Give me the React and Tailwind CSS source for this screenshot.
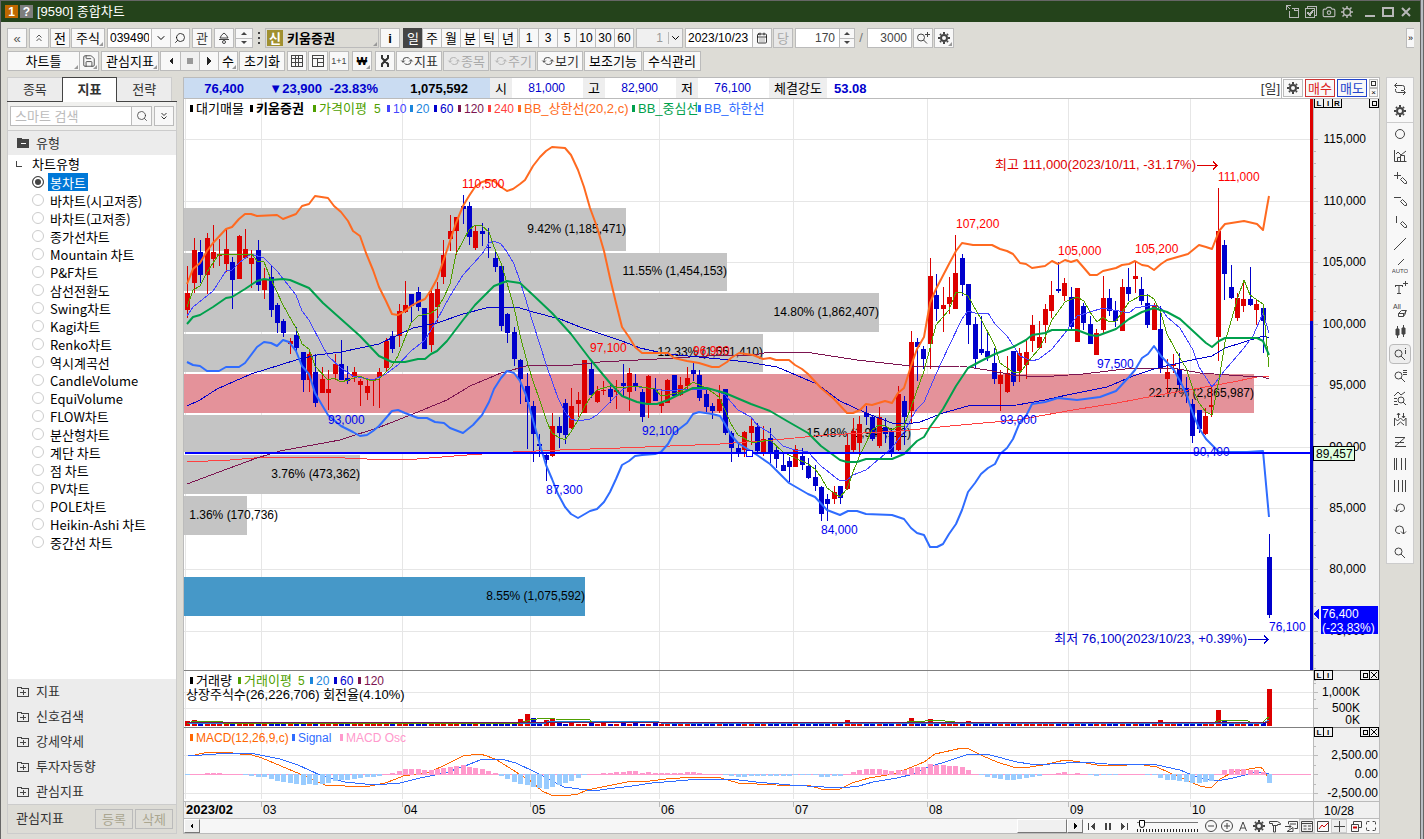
import React, { useState } from 'react';
import clsx from 'clsx';
import { Settings, Camera, Search, ChevronDown, Save, CalendarDays, Maximize } from 'lucide-react';

const RED = '#dd0000';
const BLUE = '#0000cc';

// high, body top, body bottom, low, direction (1 = up)
const CANDLES = [
  [266, 293, 310, 318, 1], [238, 250, 283, 293, 1], [240, 252, 275, 283, 0], [233, 238, 275, 294, 1], [225, 252, 259, 268, 1],
  [239, 254, 256, 266, 1], [229, 249, 264, 272, 1], [257, 262, 280, 309, 0], [235, 236, 279, 279, 1], [229, 249, 258, 258, 1],
  [250, 258, 264, 288, 1], [240, 250, 285, 291, 0], [268, 279, 290, 299, 1], [266, 277, 310, 317, 0], [303, 305, 323, 333, 0],
  [319, 321, 333, 337, 0], [338, 341, 344, 354, 1], [327, 335, 348, 352, 0], [352, 352, 380, 392, 0], [349, 354, 380, 392, 1],
  [354, 372, 403, 407, 0], [367, 379, 393, 393, 1], [370, 389, 393, 410, 1], [354, 364, 374, 380, 1], [340, 364, 380, 380, 0],
  [366, 378, 381, 384, 0], [367, 372, 377, 382, 1], [379, 381, 385, 406, 1], [380, 386, 393, 400, 1], [379, 379, 380, 406, 1],
  [368, 372, 377, 408, 1], [338, 341, 368, 372, 1], [331, 336, 349, 353, 0], [304, 311, 336, 347, 1], [281, 305, 312, 313, 1],
  [294, 294, 306, 322, 0], [287, 292, 307, 311, 0], [308, 308, 349, 349, 0], [290, 293, 345, 352, 1], [282, 289, 307, 322, 1],
  [240, 255, 277, 284, 1], [215, 231, 239, 251, 1], [217, 217, 231, 255, 1], [195, 206, 209, 224, 0], [202, 206, 237, 245, 0],
  [225, 231, 248, 250, 1], [223, 231, 234, 246, 0], [228, 247, 248, 258, 0], [252, 258, 267, 272, 0], [265, 266, 326, 331, 0],
  [313, 314, 333, 343, 0], [327, 332, 359, 366, 0], [359, 360, 379, 404, 0], [373, 386, 402, 449, 0], [401, 406, 434, 462, 0],
  [434, 444, 446, 457, 0], [453, 455, 460, 481, 0], [413, 426, 456, 457, 1], [417, 426, 433, 448, 0], [399, 403, 435, 444, 0],
  [388, 406, 428, 429, 1], [392, 400, 404, 417, 1], [360, 360, 413, 413, 1], [360, 369, 395, 398, 0], [386, 391, 402, 403, 1],
  [381, 390, 391, 395, 1], [385, 389, 397, 403, 0], [380, 390, 392, 409, 1], [364, 383, 386, 396, 0], [368, 373, 392, 411, 1],
  [374, 383, 386, 391, 0], [389, 392, 417, 422, 0], [375, 376, 404, 418, 1], [378, 389, 401, 401, 0], [389, 403, 406, 413, 1],
  [379, 380, 403, 403, 1], [375, 375, 396, 396, 0], [377, 385, 395, 396, 1], [367, 378, 386, 390, 1], [363, 370, 374, 381, 0],
  [370, 375, 398, 401, 0], [389, 394, 407, 412, 0], [403, 406, 411, 419, 0], [385, 399, 411, 413, 1], [389, 389, 433, 435, 0],
  [431, 433, 448, 462, 0], [442, 448, 452, 457, 0], [431, 432, 450, 457, 1], [418, 426, 433, 445, 1], [423, 427, 451, 453, 0],
  [426, 439, 453, 456, 1], [428, 438, 453, 463, 0], [447, 450, 459, 468, 0], [453, 465, 471, 471, 0], [457, 461, 467, 482, 0],
  [445, 449, 467, 467, 1], [448, 456, 465, 470, 0], [458, 466, 478, 479, 0], [465, 477, 486, 491, 0], [486, 487, 514, 521, 0],
  [494, 499, 504, 521, 0], [486, 492, 499, 504, 1], [486, 486, 498, 504, 0], [434, 445, 489, 490, 1], [418, 431, 450, 452, 1],
  [416, 424, 443, 456, 1], [406, 413, 417, 425, 0], [415, 417, 439, 441, 0], [407, 417, 446, 448, 1], [418, 427, 434, 443, 0],
  [430, 432, 452, 457, 0], [386, 394, 450, 451, 1], [396, 401, 417, 445, 0], [331, 342, 411, 424, 1], [338, 342, 347, 381, 0],
  [346, 349, 359, 369, 0], [258, 276, 344, 369, 1], [274, 295, 309, 321, 0], [287, 305, 309, 332, 1], [277, 297, 304, 314, 1],
  [235, 273, 309, 309, 1], [254, 258, 285, 296, 0], [284, 284, 325, 344, 0], [317, 324, 359, 368, 0], [316, 349, 353, 355, 0],
  [333, 351, 357, 361, 0], [348, 363, 379, 384, 0], [370, 375, 384, 411, 1], [356, 373, 392, 393, 1], [351, 351, 382, 386, 0],
  [348, 353, 371, 382, 1], [340, 352, 365, 379, 1], [315, 325, 341, 352, 1], [321, 337, 348, 349, 1], [304, 309, 325, 343, 1],
  [281, 295, 311, 318, 1], [262, 289, 291, 293, 0], [278, 283, 296, 301, 1], [287, 297, 327, 330, 0], [288, 288, 342, 342, 1],
  [303, 306, 323, 330, 0], [316, 324, 344, 344, 0], [329, 333, 355, 355, 1], [276, 298, 330, 333, 1], [289, 298, 311, 316, 0],
  [301, 310, 321, 327, 0], [279, 287, 331, 331, 1], [268, 287, 294, 301, 0], [262, 276, 279, 293, 1], [277, 289, 301, 305, 0],
  [294, 303, 325, 328, 0], [303, 305, 330, 330, 1], [306, 329, 368, 373, 0], [359, 372, 379, 393, 1], [354, 364, 366, 373, 1],
  [353, 369, 385, 389, 0], [377, 388, 392, 403, 0], [399, 404, 436, 443, 0], [410, 410, 429, 433, 0], [408, 416, 434, 435, 1],
  [386, 405, 407, 417, 1], [188, 231, 337, 361, 1], [240, 245, 274, 300, 0], [265, 287, 298, 299, 0], [293, 298, 318, 321, 1],
  [283, 299, 306, 312, 1], [267, 299, 305, 306, 0], [299, 304, 310, 325, 1], [308, 308, 321, 353, 0], [534, 557, 615, 618, 0],
];

const LINES = {
  ma240: '187,462 230,460 267,457 323,457 367,459 417,459 467,455 513,452 560,450 620,448 720,444 773,440 827,435 900,431 950,426 1017,420 1073,410 1117,403 1154,396 1200,388 1233,382 1257,377 1269,376',
  ma120: '187,484 219,472 257,458 280,451 340,440 380,427 413,414 447,400 470,386 501,373 530,365 573,365 600,362 657,359 707,356 753,355 770,352 805,352 857,360 920,367 960,366 987,370 1013,375 1040,377 1083,374 1133,368 1173,368 1200,373 1243,376 1263,377 1269,379',
  ma60: '187,406 200,400 217,389 251,374 296,360 317,355 341,352 379,344 398,335 413,328 437,323 463,314 490,307 517,307 533,312 560,319 580,327 622,341 640,348 667,354 720,359 747,362 777,367 817,384 840,401 866,413 892,423 907,424 920,422 943,413 968,406 1017,405 1045,400 1067,395 1107,387 1133,376 1154,369 1187,361 1212,356 1225,348 1244,342 1263,336 1269,338',
  ma10: '187,316 193,307 213,291 226,271 232,270 239,263 251,254 264,258 277,271 296,295 302,311 309,320 322,345 328,356 341,368 353,376 373,380 386,374 398,365 411,351 425,340 437,320 450,296 463,275 482,254 489,243 494,241 501,244 507,252 514,264 520,281 533,323 547,367 558,398 565,412 571,419 578,421 590,419 597,415 610,402 622,390 629,386 648,388 668,391 687,389 712,389 725,395 738,410 751,417 757,425 770,433 783,446 795,450 808,452 821,466 840,481 847,480 853,475 866,470 879,459 892,448 904,432 911,419 917,409 924,402 936,374 949,346 962,319 968,311 975,313 988,313 995,324 1007,336 1020,356 1032,361 1039,359 1052,349 1065,333 1077,316 1090,312 1103,308 1129,313 1135,308 1154,305 1161,308 1167,317 1180,328 1193,350 1199,367 1212,387 1225,370 1244,348 1253,336 1263,313 1269,333',
  ma5: '187,307 193,290 200,286 207,272 219,254 252,254 257,261 264,262 270,277 283,305 296,328 302,344 309,349 315,366 328,380 334,378 341,382 348,380 360,376 366,379 373,381 379,379 392,366 398,356 405,338 411,323 418,316 431,313 437,309 444,297 450,284 456,254 463,241 469,230 475,225 482,226 489,232 494,247 501,263 507,283 514,307 520,335 526,358 533,381 540,401 547,422 552,433 558,437 565,440 571,432 578,420 584,408 590,398 597,390 610,386 622,388 635,386 648,388 655,389 661,396 668,395 680,392 687,387 693,382 706,388 712,392 719,397 725,410 731,424 738,435 751,442 757,442 770,440 783,452 795,458 808,464 815,469 821,477 827,488 840,497 847,489 853,472 860,455 866,443 872,430 879,425 885,426 892,430 898,426 904,426 911,407 924,371 930,348 936,325 949,310 956,292 962,293 968,296 981,319 995,346 1000,363 1013,372 1020,373 1032,357 1039,349 1045,337 1052,320 1065,302 1077,297 1084,301 1090,312 1097,322 1103,317 1109,322 1116,321 1129,302 1142,295 1148,295 1154,299 1161,313 1167,334 1180,358 1186,368 1193,389 1199,403 1206,412 1212,415 1219,380 1225,342 1238,297 1244,280 1250,295 1263,304 1269,367',
  upper: '187,284 193,269 200,263 207,251 213,243 226,229 232,227 239,219 245,214 251,214 257,216 277,215 283,219 296,214 302,206 309,204 315,196 328,198 334,206 341,212 348,221 353,231 360,236 366,253 373,270 379,287 386,301 392,314 398,315 405,311 411,306 418,302 425,299 431,290 437,279 444,259 456,223 463,206 469,196 475,187 482,182 489,180 494,181 501,187 507,191 513,189 520,184 525,180 533,166 540,157 546,151 552,147 565,148 571,155 578,170 584,187 590,208 597,227 604,251 610,278 616,303 622,327 629,337 635,347 642,353 668,353 674,358 687,361 699,363 712,367 719,367 727,362 731,358 739,353 753,355 763,359 770,358 776,360 789,360 795,365 802,369 808,374 821,388 834,399 847,413 853,413 860,410 866,404 872,405 885,401 892,403 898,393 904,388 911,366 917,349 924,337 930,303 936,289 949,264 956,251 962,243 973,245 992,245 1000,249 1007,251 1013,254 1020,263 1026,264 1032,268 1045,266 1052,261 1058,264 1065,260 1071,262 1077,260 1084,268 1090,275 1097,275 1103,271 1116,268 1122,265 1129,264 1135,261 1142,265 1148,266 1154,270 1161,264 1167,260 1188,254 1199,245 1206,247 1212,249 1219,231 1225,224 1244,221 1257,224 1263,230 1267,207 1269,196',
  middle: '187,324 193,317 200,315 213,307 226,298 232,297 245,289 257,281 264,279 270,280 283,279 290,280 309,288 323,303 360,336 379,356 392,362 405,362 418,359 425,359 431,354 437,351 447,341 463,320 475,305 494,286 507,281 520,283 533,295 552,313 571,334 590,359 610,383 622,396 637,402 647,404 657,404 668,400 680,394 693,388 707,388 725,393 751,404 770,411 787,421 808,433 821,446 840,460 847,462 857,462 866,459 892,459 904,454 917,441 924,437 930,427 943,409 956,386 968,368 981,361 995,354 1013,347 1026,340 1032,335 1045,333 1052,330 1077,330 1090,335 1097,336 1116,329 1129,319 1142,312 1154,308 1167,312 1180,319 1193,331 1206,343 1212,347 1219,341 1225,338 1257,338 1263,341 1269,355',
  lower: '187,362 193,365 200,366 207,371 219,371 226,367 239,367 245,363 257,347 264,342 271,343 277,346 283,340 289,342 296,351 302,366 309,374 315,393 322,405 328,415 341,426 353,432 360,436 367,435 373,431 379,426 392,411 398,410 405,413 418,418 427,418 435,422 444,423 450,428 463,433 473,425 482,415 489,402 494,389 501,378 507,371 514,373 520,381 526,395 533,420 540,445 546,465 552,479 558,494 565,507 571,514 578,518 590,511 597,509 604,502 610,492 616,479 622,465 629,461 635,456 642,455 655,454 661,452 668,444 674,433 687,423 693,414 699,412 712,414 720,416 725,424 731,435 738,443 757,455 770,464 789,483 808,494 815,497 827,510 840,515 848,511 857,511 866,514 892,515 904,519 911,528 917,533 924,535 930,547 937,547 943,544 949,534 956,524 962,510 968,492 975,483 981,474 988,468 995,464 1000,454 1007,448 1013,439 1020,422 1026,416 1032,404 1045,402 1058,398 1077,400 1100,397 1116,391 1129,377 1135,370 1142,358 1148,354 1154,346 1161,356 1174,370 1180,381 1186,393 1193,414 1199,428 1206,439 1212,445 1219,452 1247,452 1263,451 1269,517',
  macd: '188,756 195,755 208,752 225,752 240,754 252,755 262,758 300,774 325,785 345,786 370,786 385,783 396,779 403,776 430,772 447,764 463,756 480,754 487,756 497,760 516,772 532,782 542,791 551,795 565,796 578,794 587,790 607,786 632,781 642,782 666,779 694,777 721,778 738,783 776,785 811,786 821,789 840,789 852,783 869,778 893,774 907,769 924,762 935,754 962,748 969,749 983,756 997,762 1013,767 1030,767 1043,765 1065,760 1080,762 1097,765 1127,765 1137,764 1157,767 1170,773 1200,786 1205,787 1212,787 1220,779 1233,772 1260,767 1263,769 1269,780',
  signal: '188,756 230,753 255,754 280,759 298,765 320,775 345,782 375,785 400,783 420,778 445,773 465,766 480,760 501,759 516,763 537,773 564,787 594,791 607,789 632,786 652,783 700,779 731,779 756,782 790,785 824,787 842,788 859,786 873,782 897,778 914,774 928,767 945,762 969,754 990,755 1017,762 1030,764 1050,764 1083,762 1107,764 1157,765 1180,770 1197,777 1217,781 1233,778 1253,773 1263,772 1269,774',
  vol5: '187,724 193,721 222,721 223,723 520,723 530,720 545,718 555,719 590,720 592,723 907,722 925,721 935,720 955,722 960,723 1215,722 1222,720 1246,720 1250,722 1262,723 1266,719 1269,717',
};

const OSC = [
  -1, 1, 1, 2, 2, 2, 1, 0, 0, -1, -2, -3, -3, -5, -7, -8, -9, -10, -11, -10, -11, -10, -9, -7, -6, -6, -5, -4, -3, -3,
  -2, 1, 2, 4, 6, 6, 6, 5, 5, 6, 7, 8, 9, 10, 8, 7, 6, 4, 2, -2, -5, -8, -10, -11, -13, -14, -15, -13, -11, -9,
  -7, -4, -1, 0, 1, 2, 2, 3, 3, 4, 4, 2, 3, 2, 2, 2, 2, 2, 3, 3, 2, 1, 0, 0, -1, -2, -3, -3, -2, -2,
  -2, -2, -2, -2, -2, -1, -1, -1, -1, -3, -3, -2, -2, 1, 3, 5, 6, 6, 6, 5, 4, 5, 5, 7, 8, 8, 11, 10, 10, 9,
  9, 8, 5, 1, -1, -3, -4, -5, -6, -6, -5, -4, -3, -2, 0, 1, 2, 3, 1, 2, 0, -1, -2, -1, -1, -1, 0, 0, 1, 0,
  -1, -1, -4, -6, -6, -7, -8, -9, -9, -8, -7, 1, 5, 6, 6, 6, 5, 5, 3, -9,
];

// sessions whose volume stands out from the 2-3px floor: index -> [height, up]
const VOLUME_PEAKS = {
  0: [5, 1], 1: [6, 1], 6: [3, 1], 52: [7, 1], 53: [12, 1], 54: [8, 0], 55: [4, 0], 56: [6, 1], 57: [7, 1],
  103: [6, 1], 113: [8, 1], 116: [7, 1], 122: [5, 1], 152: [6, 1], 161: [16, 1], 162: [5, 0], 169: [37, 1],
};

const PROFILE = [
  { y: 208, h: 43, end: 626, label: '9.42% (1,185,471)' },
  { y: 253, h: 38, end: 727, label: '11.55% (1,454,153)' },
  { y: 293, h: 39, end: 879, label: '14.80% (1,862,407)' },
  { y: 334, h: 38, end: 763, label: '12.33% (1,551,410)' },
  { y: 374, h: 39, end: 1254, label: '22.77% (2,865,987)', fill: '#e4929a' },
  { y: 415, h: 37, end: 911, label: '15.48% (1,947,112)' },
  { y: 455, h: 39, end: 360, label: '3.76% (473,362)' },
  { y: 496, h: 39, end: 247, label: '1.36% (170,736)', labelEnd: 278 },
  { y: 577, h: 39, end: 585, label: '8.55% (1,075,592)', fill: '#4698c8' },
];

const PRICES = [
  [139, '115,000'], [201, '110,000'], [262, '105,000'], [324, '100,000'], [385, '95,000'],
  [447, '90,000'], [508, '85,000'], [569, '80,000'], [631, '75,000'],
];

const MONTHS = [[261, '03'], [402, '04'], [530, '05'], [659, '06'], [793, '07'], [927, '08'], [1068, '09'], [1190, '10']];

const MARKS = [
  [462, 188, '110,500', 1], [590, 352, '97,100', 1], [693, 355, '96,900', 1], [956, 228, '107,200', 1], [1058, 255, '105,000', 1],
  [1135, 253, '105,200', 1], [1218, 181, '111,000', 1], [328, 424, '93,000', 0], [546, 494, '87,300', 0], [642, 435, '92,100', 0],
  [821, 534, '84,000', 0], [1000, 424, '93,000', 0], [1097, 368, '97,500', 0], [1193, 456, '90,400', 0], [1269, 631, '76,100', 0],
];

const PRICE_LEGEND = [
  [190, '대기매물', '#000'], [250, '키움증권', '#000', 'bold'], [313, '가격이평', '#4f9f00'], [0, '5', '#4f9f00', '', 374],
  [387, '10', '#4444ff'], [410, '20', '#1c86dc'], [434, '60', BLUE], [458, '120', '#7c1450'], [488, '240', '#ff4040'],
  [518, 'BB_상한선(20,2,c)', '#ff6a20'], [632, 'BB_중심선', '#00a04c'], [698, 'BB_하한선', '#2f6cff'],
];
const VOLUME_LEGEND = [
  [190, '거래량', '#000'], [238, '거래이평', '#4f9f00'], [0, '5', '#4f9f00', '', 298], [310, '20', '#1c86dc'],
  [334, '60', BLUE], [358, '120', '#7c1450'],
];
const MACD_LEGEND = [[190, 'MACD(12,26,9,c)', '#ff6600'], [292, 'Signal', '#2f6cff'], [340, 'MACD Osc', '#ff99cc']];

const candleX = (i) => Math.round(187.4 + i * 6.4);

const Legend = ({ items, y }) => items.map(([x, label, color, weight, textX]) => (
  <g key={label + x} fill={color}>
    {x > 0 && <rect x={x} y={y - 8} width="3" height="7" />}
    <text x={textX || x + 6} y={y} fontSize={/[가-힣]/.test(label) ? 13 : 12} fontWeight={weight || 'normal'}>{label}</text>
  </g>
));

const CornerBox = ({ x, y, glyph }) => (
  <g stroke="#000" fill="#f0f0f0">
    <rect x={x + 0.5} y={y + 0.5} width="9" height="9" />
    {glyph === 'box' && <rect x={x + 3.5} y={y + 3.5} width="4" height="4" />}
    {glyph === 'x' && <path d={`M${x + 2} ${y + 2}l6 6m0 -6l-6 6`} shapeRendering="auto" />}
    {glyph.length === 1 && glyph !== 'x' && <text x={x + 5} y={y + 8} stroke="none" fill="#000" fontSize="8" fontWeight="bold" textAnchor="middle">{glyph}</text>}
  </g>
);

const Chart = () => (
  <svg viewBox="184 99 1195 719" className="block w-full h-auto font-['Liberation_Sans','Noto_Sans_CJK_KR',sans-serif] text-xs" shapeRendering="crispEdges" role="img" aria-label="키움증권 일봉 차트">
    <rect x="184" y="99" width="1195" height="719" fill="#fff" />
    <g stroke="#e6e6e6">
      {PRICES.map(([y]) => <path key={y} d={`M184 ${y + 0.5}H1310`} />)}
      {[692, 708, 755, 793].map((y) => <path key={y} d={`M184 ${y + 0.5}H1313`} />)}
      {[185, ...MONTHS.map(([x]) => x)].map((x) => <path key={x} d={`M${x + 0.5} 99V799`} />)}
    </g>

    {PROFILE.map(({ y, h, end, label, fill, labelEnd }) => (
      <g key={label}>
        <rect x="184" y={y} width={end - 184} height={h} fill={fill || '#c4c4c4'} />
        <text x={labelEnd || end} y={y + Math.round(h / 2) + 3} textAnchor="end">{label}</text>
      </g>
    ))}

    {CANDLES.map(([high, top, bottom, low, up], i) => (
      <g key={i} fill={up ? RED : BLUE}>
        <rect x={candleX(i)} y={high} width="1" height={low - high} />
        <rect x={candleX(i) - 2} y={top} width="5" height={Math.max(bottom - top, 1)} />
      </g>
    ))}

    <g fill="none" strokeLinejoin="round">
      <polyline points={LINES.ma240} stroke="#ff4040" />
      <polyline points={LINES.ma120} stroke="#7c1450" />
      <polyline points={LINES.ma60} stroke={BLUE} />
      <polyline points={LINES.ma10} stroke="#4444ff" />
      <polyline points={LINES.ma5} stroke="#4f9f00" />
      <g strokeWidth="2" shapeRendering="auto">
        <polyline points={LINES.upper} stroke="#ff6a20" />
        <polyline points={LINES.lower} stroke="#2f6cff" />
        <polyline points={LINES.middle} stroke="#00a04c" />
      </g>
    </g>

    <rect x="185" y="452" width="1126" height="2" fill="#0000ff" />
    <rect x="746.5" y="450.5" width="6" height="6" fill="#fff" stroke="#0000ff" />

    {MARKS.map(([x, y, label, high]) => (
      <text key={x} x={x} y={y} fill={high ? '#ff0000' : '#0000ee'}>{label}</text>
    ))}
    <text x="1196" y="169" fontSize="13" textAnchor="end" fill={RED}>최고 111,000(2023/10/11, -31.17%)</text>
    <path d="M1197 165.5h20m-4 -4l4 4l-4 4" fill="none" stroke={RED} />
    <text x="1247" y="643" fontSize="13" textAnchor="end" fill={BLUE}>최저 76,100(2023/10/23, +0.39%)</text>
    <path d="M1248 639.5h20m-4 -4l4 4l-4 4" fill="none" stroke={BLUE} />

    <Legend items={PRICE_LEGEND} y={113} />

    {/* volume */}
    {CANDLES.map(([, , , , up], i) => {
      const [h, rising] = VOLUME_PEAKS[i] || [2 + ((i * 7) % 5 < 2 ? 1 : 0), up];
      return <rect key={i} x={candleX(i) - 2} y={726 - h} width="5" height={h} fill={rising ? RED : BLUE} />;
    })}
    <path d="M187 723.5H545L548 721.5H658L662 723.5H1262L1269 720" fill="none" stroke="#1c86dc" />
    <polyline points={LINES.vol5} fill="none" stroke="#4f9f00" />
    <path d="M187 722.5H1269" stroke="#7c1450" />
    <path d="M184 670.5H1379M184 727.5H1379" stroke="#808080" />
    <Legend items={VOLUME_LEGEND} y={685} />
    <text x="186" y="699" fontSize="13">상장주식수(26,226,706) 회전율(4.10%)</text>

    {/* MACD */}
    <path d="M187 774.5H1311" stroke="#ff99cc" />
    <g fill="none">
      <polyline points={LINES.macd} stroke="#ff6600" />
      <polyline points={LINES.signal} stroke="#2f6cff" />
    </g>
    {OSC.map((v, i) => (
      <rect key={i} x={candleX(i) - 2} y={v > 0 ? 775 - v : 774} width="5" height={Math.abs(v)} fill={v > 0 ? '#ff99cc' : '#99ccff'} />
    ))}
    <Legend items={MACD_LEGEND} y={742} />

    {/* value axis */}
    <rect x="1313" y="99" width="66" height="719" fill="#f0f0f0" />
    <path d="M1313.5 99V818" stroke="#bbb" />
    <path d="M1313 670.5H1379M1313 727.5H1379" stroke="#808080" />
    <rect x="1310" y="99" width="3" height="222" fill={RED} />
    <rect x="1310" y="321" width="3" height="349" fill={BLUE} />
    <g stroke="#bbb">
      {PRICES.map(([y]) => <path key={y} d={`M1314 ${y + 0.5}h4m-4 12h2m-2 12h2m-2 13h2m-2 12h2`} />)}
      {[692, 708, 755, 774, 793].map((y) => <path key={y} d={`M1314 ${y + 0.5}h4m-4 -9h2`} />)}
    </g>
    <g textAnchor="end">
      {PRICES.map(([y, label]) => <text key={y} x="1366" y={y + 4}>{label}</text>)}
      <text x="1360" y="696">1,000K</text>
      <text x="1360" y="712">500K</text>
      <text x="1360" y="724">0K</text>
      <text x="1378" y="759">2,500.00</text>
      <text x="1378" y="778">0.00</text>
      <text x="1378" y="797">-2,500.00</text>
    </g>
    <rect x="1313.5" y="446.5" width="41" height="14" fill="#e0ffe0" stroke="#000" />
    <text x="1316" y="458">89,457</text>
    <path d="M1319 608v12l-6 -6z" fill="#0000ff" />
    <rect x="1321" y="606" width="57" height="28" fill="#0000ff" />
    <text x="1322" y="618" fill="#fff">76,400</text>
    <text x="1322" y="632" fill="#fff">(-23.83%)</text>
    <CornerBox x={1314} y={98} glyph="L" /><CornerBox x={1323} y={98} glyph="I" /><CornerBox x={1332} y={98} glyph="R" />
    <CornerBox x={1369} y={98} glyph="box" />
    {[670, 727].map((y) => (
      <g key={y}>
        <CornerBox x={1314} y={y} glyph="L" /><CornerBox x={1323} y={y} glyph="I" />
        <CornerBox x={1360} y={y} glyph="box" /><CornerBox x={1369} y={y} glyph="x" />
      </g>
    ))}

    {/* time axis */}
    <rect x="184" y="801" width="1129" height="17" fill="#f0f0f0" />
    <path d="M184 801.5H1379M1313.5 801V818M185.5 802v5" stroke="#bbb" />
    <text x="186" y="814" fontSize="13" fontWeight="bold">2023/02</text>
    {MONTHS.map(([x, label]) => (
      <g key={x}>
        <path d={`M${x + 0.5} 802v5`} stroke="#bbb" />
        <text x={x + 2} y="814">{label}</text>
      </g>
    ))}
    <text x="1324" y="815">10/28</text>
  </svg>
);

const Glyph = ({ children, size = 'w-4 h-4', className, crisp = true }) => (
  <svg viewBox="0 0 16 16" className={clsx('shrink-0', size, className)} fill="none" stroke="currentColor" shapeRendering={crisp ? 'crispEdges' : 'auto'} aria-hidden="true">{children}</svg>
);

const Cog = ({ className }) => (
  <Glyph className={className} crisp={false}>
    <circle cx="8" cy="8" r="3" strokeWidth="2" />
    <path d="M8 2v2M8 12v2M2 8h2M12 8h2M4 4l1 1M11 11l1 1M12 4l-1 1M5 11l-1 1" strokeWidth="2" />
  </Glyph>
);

const Cycle = () => (
  <Glyph size="w-3.5 h-3.5" crisp={false}>
    <path d="M3.500 9.500V7Q3.500 4 7.500 4Q10 4 11 5.500M12.500 6.500V9Q12.500 12 8.500 12Q6 12 5 10.500M1.500 7.500l2 2l2 -2M10.500 8.500l2 -2l2 2" />
  </Glyph>
);

const Btn = ({ className, menu, label, children, ...rest }) => (
  <button
    type="button"
    aria-label={label}
    className={clsx(
      'relative h-5 shrink-0 flex items-center justify-center border border-[#bbb] bg-[#f8f8f8] whitespace-nowrap leading-none cursor-pointer disabled:bg-[#e8e8e8] disabled:text-[#aaa]',
      menu && 'after:absolute after:right-px after:bottom-px after:border-2 after:border-transparent after:border-r-[#999] after:border-b-[#999]',
      className,
    )}
    {...rest}
  >
    {children}
  </button>
);

const Spinner = ({ className, label }) => (
  <div className={clsx('h-5 shrink-0 flex flex-col border border-[#bbb] bg-[#f8f8f8]', className)}>
    <button type="button" aria-label={`${label} 증가`} className="flex-1 flex items-center justify-center border-b border-[#bbb]">
      <svg viewBox="0 0 6 3" className="w-1.5 h-[3px]"><path d="M0 3h6l-3 -3z" fill="#444" /></svg>
    </button>
    <button type="button" aria-label={`${label} 감소`} className="flex-1 flex items-center justify-center">
      <svg viewBox="0 0 6 3" className="w-1.5 h-[3px]"><path d="M0 0h6l-3 3z" fill="#444" /></svg>
    </button>
  </div>
);

const Field = ({ label, className, ...rest }) => (
  <input type="text" aria-label={label} className={clsx('h-5 shrink-0 border border-[#bbb] bg-white px-1 text-xs outline-none', className)} {...rest} />
);

const TitleBar = () => (
  <header className="h-[21px] flex items-center bg-[#24431b] text-white pl-1 pr-[5px] text-[13px]">
    <span className="w-[13px] h-[13px] flex items-center justify-center bg-[#c06800] text-xs font-bold leading-none">1</span>
    <button type="button" aria-label="도움말" className="w-[13px] h-[13px] ml-0.5 flex items-center justify-center bg-[#7d7d7d] text-xs font-bold leading-none">?</button>
    <h1 className="ml-1 leading-none">[9590] 종합차트</h1>
    <div className="ml-auto flex items-center text-[#b8b8b8]">
      <button type="button" aria-label="도킹" className="w-[18px] flex justify-center"><Glyph><path d="M1.500 1.500h4m-4 0v4m0 -4l4 4M4.500 7v6.500h9V4.500H7M9.500 4v2.500h4" /></Glyph></button>
      <button type="button" aria-label="선택" className="w-[18px] flex justify-center"><Glyph><path d="M4.500 4V2.500h9v9H12M2.500 4.500h9v9h-9z" /><path d="M4.500 8l2.500 3l3 -5" strokeWidth="2" /></Glyph></button>
      <button type="button" aria-label="화면 캡처" className="w-[18px] flex justify-center"><Camera size={14} strokeWidth={2} /></button>
      <button type="button" aria-label="설정" className="w-[18px] flex justify-center">
        <Glyph crisp={false}><circle cx="8" cy="8" r="3.500" strokeWidth="1.500" /><path d="M8 2v2M8 12v2M2 8h2M12 8h2M3.500 3.500l2 2M10.500 10.500l2 2M12.500 3.500l-2 2M5.500 10.500l-2 2" strokeWidth="1.500" /></Glyph>
      </button>
      <button type="button" aria-label="최소화" className="w-[18px] ml-[5px] flex justify-center"><Glyph><path d="M3 12h10" strokeWidth="2" /></Glyph></button>
      <button type="button" aria-label="최대화" className="w-[18px] flex justify-center"><Glyph><path d="M3 4h10v8H3z" strokeWidth="2" /></Glyph></button>
      <button type="button" aria-label="닫기" className="w-[18px] flex justify-center"><Glyph crisp={false}><path d="M4 4l8 8m0 -8l-8 8" strokeWidth="2" /></Glyph></button>
    </div>
  </header>
);

const PERIODS = ['일', '주', '월', '분', '틱', '년'];
const MINUTES = ['1', '3', '5', '10', '30', '60'];

const Toolbar = () => {
  const [period, setPeriod] = useState('일');

  return (
    <div className="px-1.5 py-1.5 flex flex-col gap-[3px] text-[13px]">
      <div className="flex">
        <Btn className="w-5 text-[#555]" label="이전">«</Btn>
        <Btn className="w-5 ml-0.5" label="접기"><Glyph crisp={false} className="text-[#555]"><path d="M5.500 7.500L8 5l2.500 2.500M5.500 11L8 8.500l2.500 2.500" /></Glyph></Btn>
        <Btn className="w-5 ml-px">전</Btn>
        <Btn className="w-[34px] ml-px" menu>주식</Btn>
        <Field label="종목코드" defaultValue="039490" className="w-[45px] ml-0.5 !px-0.5" />
        <Btn className="w-5 -ml-px" label="종목 목록"><ChevronDown size={12} /></Btn>
        <Btn className="w-5 -ml-px" label="종목 찾기"><Search size={12} strokeWidth={1.5} className="-scale-x-100" /></Btn>
        <Btn className="w-5 ml-0.5 text-[#444]">관</Btn>
        <Btn className="w-5 ml-0.5" label="종목 알림"><Glyph className="text-[#444]" crisp={false}><path d="M8 3Q5 5 4 8h8Q11 5 8 3M3 9.500h10" /><circle cx="8" cy="12" r="1.500" /></Glyph></Btn>
        <Spinner className="w-[18px] ml-px" label="종목" />
        <span className="w-3 h-5 flex flex-col items-center justify-center gap-[3px]">
          <i className="w-0.5 h-0.5 bg-[#444]" /><i className="w-0.5 h-0.5 bg-[#444]" /><i className="w-0.5 h-0.5 bg-[#444]" />
        </span>
        <Btn className="w-[114px] !justify-start !bg-[#dddcd6] font-bold" menu>
          <span className="w-4 h-4 mx-px flex items-center justify-center bg-[#a09030] text-white">신</span>
          <span className="ml-[3px]">키움증권</span>
        </Btn>
        <Btn className="w-5 ml-px font-bold">i</Btn>
        <div className="flex ml-[3px]">
          {PERIODS.map((name) => (
            <Btn key={name} onClick={() => setPeriod(name)} aria-pressed={period === name} className={clsx('w-5 -mr-px', period === name && '!bg-[#444] !border-[#444] text-white')}>{name}</Btn>
          ))}
        </div>
        <div className="flex ml-0.5 text-xs">
          {MINUTES.map((name) => <Btn key={name} className="w-5 -mr-px">{name}</Btn>)}
        </div>
        <div className="relative ml-[3px] w-[47px]">
          <select aria-label="주기" disabled className="w-full h-5 appearance-none border border-[#bbb] bg-[#f0f0f0] pr-[19px] text-right text-xs text-[#999] opacity-100 [text-align-last:right]">
            <option>1</option>
          </select>
          <ChevronDown size={12} className="absolute right-px top-1 w-[14px] border-l border-[#bbb]" />
        </div>
        <Field label="조회일자" defaultValue="2023/10/23" className="w-[68px] ml-0.5 !px-0.5" />
        <Btn className="w-5 -ml-px" label="달력"><CalendarDays size={12} strokeWidth={1.5} /></Btn>
        <Btn className="w-5 ml-px" disabled>당</Btn>
        <Field label="조회 봉수" defaultValue="170" className="w-[45px] ml-0.5 text-right text-[#444]" />
        <Spinner className="w-4 -ml-px" label="봉수" />
        <span className="w-3 leading-5 text-center text-[#777]">/</span>
        <Field label="최대 봉수" defaultValue="3000" className="w-[45px] text-right text-[#444]" />
        <Btn className="w-5 ml-px text-[#444]" label="확대"><Glyph crisp={false}><circle cx="6" cy="7.500" r="3.500" /><path d="M8.500 10l3.500 3.500M12.500 2v5M10 4.500h5" /></Glyph></Btn>
        <Btn className="w-5 ml-px" label="차트 설정" menu><Cog className="text-[#444]" /></Btn>
        <Btn className="w-2 ml-auto text-[9px] border-r-0" label="도구 더보기">»</Btn>
      </div>

      <div className="flex">
        <Btn className="w-[73px]" menu>차트틀</Btn>
        <Btn className="w-5 -ml-px text-[#444]" label="저장" menu><Save size={14} strokeWidth={1.5} /></Btn>
        <Btn className="w-[58px] ml-0.5" menu>관심지표</Btn>
        <Btn className="w-[21px] ml-px" label="뒤로"><Glyph><path d="M10 4v8l-4 -4z" fill="#222" stroke="none" /></Glyph></Btn>
        <Btn className="w-5 -ml-px !bg-[#f0f0f0]" label="정지"><span className="w-1.5 h-1.5 bg-[#999]" /></Btn>
        <Btn className="w-5 -ml-px" label="앞으로"><Glyph><path d="M6 4v8l4 -4z" fill="#222" stroke="none" /></Glyph></Btn>
        <Btn className="w-5 -ml-px" menu>수</Btn>
        <Btn className="w-[46px] ml-px">초기화</Btn>
        <Btn className="w-5 ml-0.5 text-[#444]" label="표"><Glyph size="w-[18px] h-4"><path d="M2.500 2.500h11v11h-11zM2.500 5.500h11M2.500 9.500h11M6.500 2.500v11M9.500 2.500v11" /></Glyph></Btn>
        <Btn className="w-5 ml-px text-[#444]" label="분할"><Glyph size="w-[18px] h-4"><path d="M2.500 2.500h11v11h-11zM2.500 5.500h11M7.500 5.500v8M7.500 9.500h6" /></Glyph></Btn>
        <Btn className="w-5 ml-px text-[9px] text-[#444]" label="한 칸 추가">1+1</Btn>
        <Btn className="w-5 ml-[3px] text-[11px] font-bold" menu>₩</Btn>
        <Btn className="w-5 ml-[3px] text-[#333]" label="도구"><Glyph crisp={false}><path d="M5 2v3l6 6v3M11 2v3l-6 6v3" strokeWidth="2" /></Glyph></Btn>
        <Btn className="w-[46px] ml-px text-[#333]"><Cycle />지표</Btn>
        <Btn className="w-[46px] ml-px" disabled><Cycle />종목</Btn>
        <Btn className="w-[46px] ml-px" disabled><Cycle />주기</Btn>
        <Btn className="w-[46px] ml-px text-[#333]"><Cycle />보기</Btn>
        <Btn className="w-[58px] ml-px">보조기능</Btn>
        <Btn className="w-[58px] ml-px">수식관리</Btn>
      </div>
    </div>
  );
};

const CHART_TYPES = [
  '봉차트', '바차트(시고저종)', '바차트(고저종)', '종가선차트', 'Mountain 차트', 'P&F차트', '삼선전환도', 'Swing차트', 'Kagi차트',
  'Renko차트', '역시계곡선', 'CandleVolume', 'EquiVolume', 'FLOW차트', '분산형차트', '계단 차트', '점 차트', 'PV차트', 'POLE차트',
  'Heikin-Ashi 차트', '중간선 차트',
];
const GROUPS = ['지표', '신호검색', '강세약세', '투자자동향', '관심지표'];

const Folder = ({ open }) => (
  <svg viewBox="0 0 12 12" className="w-3 h-3 mr-[7px] shrink-0" fill="none" stroke="#444" shapeRendering="crispEdges" aria-hidden="true">
    <path d="M0.500 10.500V1.500h4v1h7v8z" fill={open ? '#444' : 'none'} />
    {open ? <path d="M4 6.500h5" stroke="#fff" /> : <path d="M3 6.500h6M6 4v5" />}
  </svg>
);

const Sidebar = () => {
  const [type, setType] = useState('봉차트');

  return (
    <aside className="w-[170px] shrink-0 flex flex-col text-[13px] text-[#333]">
      <div role="tablist" className="h-[25px] flex border-b border-[#444] pr-[5px]">
        <button type="button" role="tab" aria-selected="false" className="flex-1 border-t border-l border-[#ccc] bg-[#ececec]">종목</button>
        <button type="button" role="tab" aria-selected="true" className="flex-1 -mb-px border border-b-0 border-[#444] bg-white font-bold">지표</button>
        <button type="button" role="tab" aria-selected="false" className="flex-1 border-t border-r border-[#ccc] bg-[#ececec]">전략</button>
      </div>
      <div className="flex-1 flex flex-col border border-t-0 border-[#ccc] bg-[#ececec]">
        <div className="flex px-0.5 py-1 bg-[#f0f0ee]">
          <Field label="스마트 검색" placeholder="스마트 검색" className="flex-1 min-w-0 !text-[13px] placeholder:text-[#bbb]" />
          <Btn className="w-[21px] -ml-px" label="검색"><Search size={12} strokeWidth={1.5} /></Btn>
          <Btn className="w-5 ml-0.5" label="펼치기"><Glyph crisp={false}><path d="M5.500 5L8 7.500L10.500 5M5.500 8.500L8 11l2.500 -2.500" /></Glyph></Btn>
        </div>
        <button type="button" className="h-[25px] flex items-center px-[9px] border-t border-[#ccc] leading-none text-left"><Folder open />유형</button>
        <div className="flex-1 bg-white text-black font-['Noto_Sans_CJK_KR',sans-serif]">
          <div className="h-[18px] flex items-center pl-2"><span className="w-1.5 h-1.5 mr-2.5 border-l border-b border-[#444]" />차트유형</div>
          {CHART_TYPES.map((name) => (
            <label key={name} className="h-[18px] flex items-center pl-6 leading-none whitespace-nowrap">
              <input
                type="radio"
                name="chartType"
                checked={type === name}
                onChange={() => setType(name)}
                className="w-3 h-3 mr-1 appearance-none rounded-full border border-[#ccc] bg-white checked:border-[#444] checked:bg-[#444] checked:shadow-[inset_0_0_0_2px_white]"
              />
              <span className={clsx('h-[18px] flex items-center px-0.5', type === name && 'bg-[#0078d7] text-white')}>{name}</span>
            </label>
          ))}
        </div>
        {GROUPS.map((name) => (
          <button key={name} type="button" className="h-[25px] flex items-center px-[9px] leading-none text-left"><Folder />{name}</button>
        ))}
        <div className="h-[29px] flex items-center pl-2 pr-[3px] border-t border-[#ccc] bg-[#dddcd6]">
          <span className="mr-auto">관심지표</span>
          <Btn className="w-[38px] !bg-[#dddcd6] !text-[#aaa690]" disabled>등록</Btn>
          <Btn className="w-[38px] ml-0.5 !bg-[#dddcd6] !text-[#aaa690]" disabled>삭제</Btn>
        </div>
      </div>
    </aside>
  );
};

const QuoteBar = () => (
  <div className="h-[21px] flex items-center border-b border-[#bbb] bg-white text-xs leading-none">
    <div className="w-[306px] h-full flex items-center bg-[#cadcf2] text-[13px] font-bold text-right text-[#0000cc]">
      <span className="w-[60px]">76,400</span>
      <span className="w-[78px]">▼23,900</span>
      <span className="w-[56px]">-23.83%</span>
      <span className="w-[90px] text-black">1,075,592</span>
    </div>
    {[['시', '81,000'], ['고', '82,900'], ['저', '76,100']].map(([name, value]) => (
      <React.Fragment key={name}>
        <span className="w-[22px] h-full flex items-center justify-center bg-[#eee] text-[13px]">{name}</span>
        <span className="w-[71px] pr-[18px] text-right text-[#0000cc]">{value}</span>
      </React.Fragment>
    ))}
    <span className="w-[58px] h-full flex items-center justify-center bg-[#eee] text-[13px]">체결강도</span>
    <span className="pl-[7px] text-[13px] font-bold text-[#0000cc]">53.08</span>
    <span className="ml-auto pr-px text-[13px] text-[#333]">[일]</span>
    <div className="h-full flex items-center gap-0.5 px-px border-l border-[#bbb] text-[13px]">
      <Btn className="w-5 !h-[18px]" label="설정"><Cog className="text-[#444]" /></Btn>
      <Btn className="w-[30px] !h-[18px] !border-[#cc3333] text-[#dd2222]">매수</Btn>
      <Btn className="w-[30px] !h-[18px] !border-[#2244cc] text-[#2244cc]">매도</Btn>
      <div className="w-[9px] h-[18px] flex flex-col">
        <Btn className="!h-[9px]" label="창 크기"><span className="w-[5px] h-[5px] border border-[#333]" /></Btn>
        <Btn className="!h-[9px] text-[8px]" label="창 닫기">×</Btn>
      </div>
    </div>
  </div>
);

const BOTTOM_TOOLS = [
  ['축소', <><circle cx="8" cy="8" r="5.500" /><path d="M5 8h6" /></>],
  ['확대', <><circle cx="8" cy="8" r="5.500" /><path d="M5 8h6M8 5v6" /></>],
  ['글자', <path d="M4.500 13l3.500 -9l3.500 9M6 10h4" />],
  ['환경설정', <><circle cx="8" cy="8" r="3" strokeWidth="2" /><path d="M8 2v2M8 12v2M2 8h2M12 8h2M4 4l1 1M11 11l1 1M12 4l-1 1M5 11l-1 1" strokeWidth="2" /></>],
  ['도구', <path d="M2.500 5.500v-2h8l3 2v1h-3v1h-5v-2zM6.500 8v6h2v-6" />],
  ['보내기', <path d="M5.500 6V3.500h9v7h-3M7 6h6M2 8.500h6m-2 -2l2 2l-2 2M4 13.500l6 -4v4z" />],
  ['데이터', <path d="M2.500 3.500h11v10h-11zM2.500 5.500h11M4.500 8h3M4.500 11h3M9 8h3M9 11h3" />, 'on'],
  ['차트', <><path d="M2.500 3.500h11v10h-11z" /><path d="M4 11l3 -4l2 2l4 -4" stroke="#c00" /></>],
  ['십자선', <path d="M8.500 3v11M3 8.500h11" />, 'on'],
  ['복사', <><path d="M6.500 6V3.500h8v6H12M4.500 6.500h7v7h-7z" /><path d="M6 9.500h4" stroke="#c00" strokeWidth="2" /></>],
];

const BottomBar = () => (
  <div className="h-[14px] flex items-center bg-[#f8f8f8] border-t border-[#bbb] box-content text-[#444]">
    <button type="button" aria-label="왼쪽으로" className="w-4 h-full flex items-center justify-center border border-white border-r-[#777] border-b-[#777] bg-[#f0f0f0]"><Glyph><path d="M9 5v6l-3 -3z" fill="#000" stroke="none" /></Glyph></button>
    <div className="flex-1 h-full flex justify-end bg-[#f6f6f6]">
      <div className="w-[50px] h-full border border-white border-r-[#777] border-b-[#777] bg-[#f0f0f0]" />
    </div>
    <button type="button" aria-label="오른쪽으로" className="w-4 h-full mr-px flex items-center justify-center border border-white border-r-[#777] border-b-[#777] bg-[#f0f0f0]"><Glyph><path d="M7 5v6l3 -3z" fill="#000" stroke="none" /></Glyph></button>
    <button type="button" aria-label="처음" className="w-4"><Glyph><path d="M4.500 5v7" /><path d="M11 5v7l-4 -3.500z" fill="currentColor" stroke="none" /></Glyph></button>
    <button type="button" aria-label="일시정지" className="w-4"><Glyph><path d="M6 5v7M10 5v7" strokeWidth="2" /></Glyph></button>
    <button type="button" aria-label="마지막" className="w-4"><Glyph><path d="M11.500 5v7" /><path d="M5 5v7l4 -3.500z" fill="currentColor" stroke="none" /></Glyph></button>
    <label className="w-[61px] mx-[5px] flex flex-col">
      <input
        type="range"
        aria-label="재생 속도"
        min="0"
        max="100"
        defaultValue="4"
        className="w-full h-2 appearance-none bg-[linear-gradient(#777,#777)] bg-[length:100%_1px] bg-[position:0_2px] bg-no-repeat [&::-webkit-slider-thumb]:appearance-none [&::-webkit-slider-thumb]:w-1.5 [&::-webkit-slider-thumb]:h-2 [&::-webkit-slider-thumb]:border [&::-webkit-slider-thumb]:border-black [&::-webkit-slider-thumb]:bg-white [&::-webkit-slider-thumb]:rounded-b-sm"
      />
      <svg viewBox="0 0 61 4" className="w-full h-1" shapeRendering="crispEdges" aria-hidden="true">
        <path d="M0 2.500H61" stroke="#222" strokeWidth="3" strokeDasharray="1 2" />
      </svg>
    </label>
    {BOTTOM_TOOLS.map(([name, art, on]) => (
      <button key={name} type="button" aria-label={name} className={clsx('w-4 h-[14px] flex items-center justify-center', on && 'bg-[#eee] outline outline-1 -outline-offset-1 outline-[#ccc]')}>
        <Glyph crisp={false}>{art}</Glyph>
      </button>
    ))}
    <button type="button" aria-label="전체 화면" className="w-4 flex justify-center"><Maximize size={12} strokeWidth={2} /></button>
  </div>
);

const pen = <path d="M8.500 9.500l2 -2l4 4v2h-2z" />;
const lens = <><circle cx="6.500" cy="7.500" r="3.500" /><path d="M9 10l4 4" /></>;

const DRAW_TOOLS = [
  ['원', <circle cx="8" cy="8" r="4.500" />],
  ['분석', <path d="M2.500 2v11.500h12M5.500 13V9.500h3V13M8.500 13V7.500h4V13M4 6l2 -2l3 3l5 -4" />],
  ['십자 그리기', <><path d="M5.500 2v7M2 5.500h7" />{pen}</>],
  ['수평선', <><path d="M2 5.500h7" />{pen}</>],
  ['수직선', <><path d="M4.500 2v7" />{pen}</>],
  ['추세선', <path d="M2 14L14 2" />],
  ['자동 추세선', <><path d="M6 7l6 -6" /><text x="8" y="15" fontSize="6" textAnchor="middle" fill="currentColor" stroke="none">AUTO</text></>],
  ['텍스트', <path d="M3.500 5.500h7M7 5.500v8M3.500 5v2M10.500 5v2M5 13.500h4M13.500 1v5M11 3.500h5" />],
  ['전체 삭제', <><text x="1" y="7" fontSize="7" fill="currentColor" stroke="none">All</text><path d="M6.500 11.500l3 -3h5l-2 3zv3h5l2 -3v-3M11.500 11.500v3" /></>],
  ['봉', <path d="M5.500 2v12M11.500 1v12M4 5h3v6H4zM10 4h3v6h-3z" fill="currentColor" />],
  ['정보 돋보기', <>{lens}<path d="M13.500 2v1M13.500 4v4" /></>, 'on'],
  ['목록 돋보기', <>{lens}<path d="M11 2.500h4M11 4.500h4M11 6.500h4" /></>],
  ['패턴 찾기', <><path d="M2 6l4 -4l3 3l4 -3M2 8.500h3M2 11.500h3M2 14.500h4" /><circle cx="9" cy="10" r="3" /><path d="M11 12l3 3" /></>],
  ['고저 표시', <path d="M2.500 14V6l3 3l3 -3l3 3l2.500 -3v8M5 13l3.500 -3l3.500 3M6.500 1v5M5 3l1.500 -2l1.500 2M11.500 1v5M10 4l1.500 2l1.500 -2" />],
  ['지그재그', <path d="M3 3.500h10l-10 9h11M3 8.500h9" />],
  ['수직선 묶음', <path d="M2.500 2v12M4.500 2v12M9.500 2v12M13.500 2v12" />],
  ['등간격선', <path d="M2.500 2v12M6.500 2v12M10.500 2v12M13.500 2v12" />],
  ['되돌리기', <path d="M4.500 12V8Q4.500 4 8.500 4Q12.500 4 12.500 8Q12.500 11.500 8 11.500M2 9.500l2.500 2.500l2.500 -2.500" />],
  ['다시하기', <path d="M11.500 12V8Q11.500 4 7.500 4Q3.500 4 3.500 8Q3.500 11.500 8 11.500M9 9.500l2.500 2.500l2.500 -2.500" />],
  ['돋보기', lens],
];

const DrawTools = () => (
  <nav aria-label="그리기 도구" className="w-7 shrink-0 self-start border border-[#ccc] bg-[#f8f8f8] text-[#444]">
    <div className="border-b border-[#ccc]">
      <button type="button" aria-label="새로고침" className="w-full h-[22px] flex items-center justify-center">
        <Glyph crisp={false}><path d="M5 2L2.500 4.500L5 7M3 4.500h7.500q2 0 2 2V9M11 9.500l-2 0M11 14l2.500 -2.500L11 9M13 11.500H5.500q-2 0 -2 -2V8" /></Glyph>
      </button>
      <button type="button" aria-label="설정" className="w-full h-[22px] flex items-center justify-center"><Cog /></button>
    </div>
    {DRAW_TOOLS.map(([name, art, on]) => (
      <button key={name} type="button" aria-label={name} className="w-full h-[22px] flex items-center justify-center">
        <span className={clsx('w-[22px] h-5 flex items-center justify-center border rounded', on ? 'border-[#bbb] bg-[#eee]' : 'border-transparent')}>
          <Glyph crisp={false}>{art}</Glyph>
        </span>
      </button>
    ))}
  </nav>
);

const App = () => (
  <div className="min-h-screen flex bg-[#b9bdc4] border-r border-[#666] pr-0.5 font-['Liberation_Sans','Noto_Sans_CJK_KR',sans-serif] text-black">
    <div className="flex-1 min-w-0 flex flex-col bg-[#dddcd6] border-t border-x border-[#666]">
      <TitleBar />
      <Toolbar />
      <div className="flex-1 flex gap-1.5 px-1.5 pb-[5px]">
        <Sidebar />
        <main className="flex-1 min-w-0 self-start border border-[#bbb]">
          <QuoteBar />
          <Chart />
          <BottomBar />
        </main>
        <DrawTools />
      </div>
    </div>
  </div>
);

export default App;
